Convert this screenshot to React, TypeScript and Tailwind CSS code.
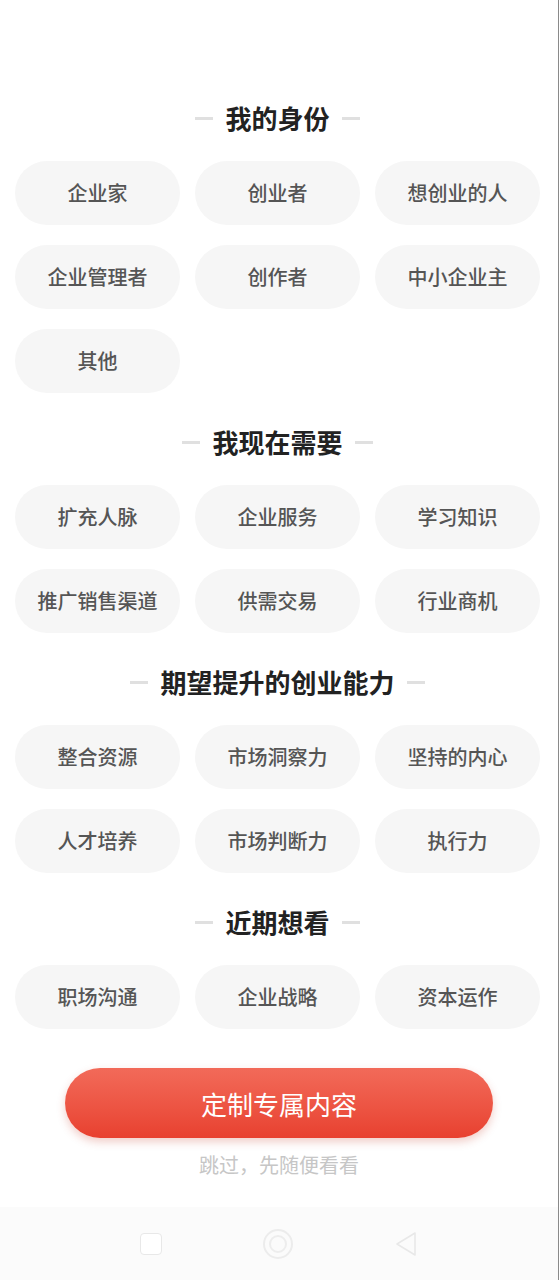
import React from 'react';

const sections = [
  { title: '我的身份', items: ['企业家', '创业者', '想创业的人', '企业管理者', '创作者', '中小企业主', '其他'] },
  { title: '我现在需要', items: ['扩充人脉', '企业服务', '学习知识', '推广销售渠道', '供需交易', '行业商机'] },
  { title: '期望提升的创业能力', items: ['整合资源', '市场洞察力', '坚持的内心', '人才培养', '市场判断力', '执行力'] },
  { title: '近期想看', items: ['职场沟通', '企业战略', '资本运作'] },
];

function Title({ text }: { text: string }) {
  return (
    <div className="flex h-[36px] items-center justify-center gap-[12px]">
      <span className="h-[3px] w-[18px] bg-[#e0e0e0]" />
      <span className="text-[26px] font-bold leading-[36px] text-[#222]">{text}</span>
      <span className="h-[3px] w-[18px] bg-[#e0e0e0]" />
    </div>
  );
}

export default function App() {
  return (
    <div
      className="relative min-h-[1280px] w-[559px] border-r border-[#8a8a8a] bg-white"
      style={{ fontFamily: '"Noto Sans CJK SC", "Noto Sans", sans-serif' }}
    >
      <div className="pl-[15px] pr-[18px] pt-[100px]">
        {sections.map((s, i) => (
          <div key={s.title} className={i === 0 ? '' : 'mt-[31px]'}>
            <Title text={s.title} />
            <div className="mt-[25px] grid grid-cols-3 gap-x-[15px] gap-y-[20px]">
              {s.items.map((it) => (
                <div
                  key={it}
                  className="flex h-[64px] items-center justify-center rounded-full bg-[#f6f6f6] text-[20px] font-medium text-[#555]"
                >
                  {it}
                </div>
              ))}
            </div>
          </div>
        ))}
      </div>

      <div className="mt-[39px] flex flex-col items-center">
        <button className="flex h-[70px] w-[428px] items-center justify-center rounded-full bg-gradient-to-b from-[#f26a59] to-[#e8402f] text-[26px] text-white shadow-[0_4px_8px_rgba(200,60,40,0.25)]">
          定制专属内容
        </button>
        <div className="mt-[13px] text-[20px] leading-[28px] text-[#c6c6c6]">跳过，先随便看看</div>
      </div>

      <div className="absolute bottom-0 left-0 right-0 flex h-[73px] items-center justify-center bg-[#fbfbfb]">
        <div className="flex w-[278px] items-center justify-between">
          <span className="h-[22px] w-[22px] rounded-[4px] border border-[#e8e8e8] bg-white" />
          <span className="flex h-[30px] w-[30px] items-center justify-center rounded-full border-2 border-[#ececec]">
            <span className="h-[18px] w-[18px] rounded-full border-2 border-[#ededed]" />
          </span>
          <svg width="24" height="26" viewBox="0 0 24 26">
            <path d="M21 2 L3 13 L21 24 Z" fill="none" stroke="#e8e8e8" strokeWidth="1.5" strokeLinejoin="round" />
          </svg>
        </div>
      </div>
    </div>
  );
}
